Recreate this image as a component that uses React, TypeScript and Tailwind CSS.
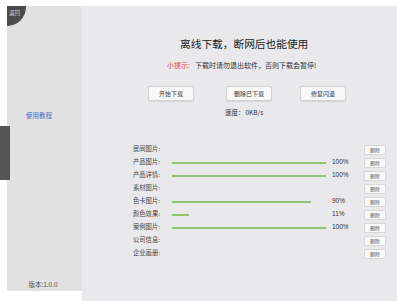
import React from "react";

const rows: { label: string; pct?: number }[] = [
  { label: "房间图片" },
  { label: "产品图片", pct: 100 },
  { label: "产品详情", pct: 100 },
  { label: "素材图片" },
  { label: "色卡图片", pct: 90 },
  { label: "颜色效果", pct: 11 },
  { label: "案例图片", pct: 100 },
  { label: "公司信息" },
  { label: "企业画册" },
];

const font = { fontFamily: '"Noto Sans CJK SC", "Noto Sans", sans-serif' };

export default function App() {
  return (
    <div
      className="relative w-[397px] h-[301px] bg-white overflow-hidden flex pt-[6px] pl-[7px]"
      style={font}
    >
      {/* sidebar */}
      <div className="relative w-[75px] h-[285px] bg-[#e1e1e1] flex flex-col items-center">
        <div className="absolute left-0 top-0 w-[19px] h-[20px] bg-[#4b4b4b] rounded-br-full">
          <span className="absolute left-[2px] top-[5px] text-[5.5px] leading-none text-[#d8d8d8]">
            返回
          </span>
        </div>
        <div className="mt-[106px] ml-[-11px] text-[6.5px] leading-none text-[#4a68c8]">使用教程</div>
        <div className="mt-auto mb-[4px] ml-[-3px] text-[6.5px] leading-none text-[#555]">版本:1.0.0</div>
      </div>
      {/* left dark tab */}
      <div className="absolute left-0 top-[126px] w-[10px] h-[54px] bg-[#555555]" />
      {/* main */}
      <div className="flex-1 h-[295px] bg-[#e9e9ec] flex flex-col">
        <div className="mt-[31px] ml-[98px] text-[10.7px] leading-[14px] text-[#222] whitespace-nowrap">
          离线下载，断网后也能使用
        </div>
        <div className="mt-[10px] ml-[85px] text-[7px] leading-[9px] whitespace-nowrap text-[#333]">
          <span className="text-[#e0464a]">小提示:</span>
          <span className="ml-[5px]">下载时请勿退出软件，否则下载会暂停!</span>
        </div>
        <div className="mt-[16px] flex">
          {["开始下载", "删除已下载", "修复闪退"].map((t, i) => (
            <div
              key={t}
              className={`w-[46px] h-[15px] bg-[#f8f8f8] border border-[#d2d2d2] rounded-[2px] shadow-[0_1px_1px_rgba(0,0,0,0.08)] flex items-center justify-center text-[6px] text-[#333] leading-none ${
                i === 0 ? "ml-[66px]" : i === 1 ? "ml-[32px]" : "ml-[28px]"
              }`}
            >
              {t}
            </div>
          ))}
        </div>
        <div className="mt-[7px] ml-[143px] text-[6.5px] leading-[8px] text-[#333] whitespace-nowrap">
          速度：<span className="ml-[1px]">0KB/s</span>
        </div>
        <div className="mt-[27px] flex flex-col">
          {rows.map((r) => (
            <div key={r.label} className="h-[13px] flex items-center">
              <div className="ml-[51px] w-[32px] text-[6.3px] leading-none text-[#444] whitespace-nowrap">
                {r.label}:
              </div>
              <div className="ml-[7px] w-[154px] h-[2px]">
                {r.pct !== undefined && (
                  <div className="h-[2px] bg-[#92c274]" style={{ width: `${r.pct}%` }} />
                )}
              </div>
              <div
                className="ml-[6px] w-[32px] text-[6.5px] leading-none text-[#333]"
                style={{ fontFamily: '"Liberation Sans", sans-serif' }}
              >
                {r.pct !== undefined ? `${r.pct}%` : ""}
              </div>
              <div className="w-[22px] h-[10px] bg-[#f8f8f8] border border-[#d8d8d8] rounded-[1px] flex items-center justify-center text-[5px] leading-none text-[#555]">
                删除
              </div>
            </div>
          ))}
        </div>
      </div>
    </div>
  );
}
